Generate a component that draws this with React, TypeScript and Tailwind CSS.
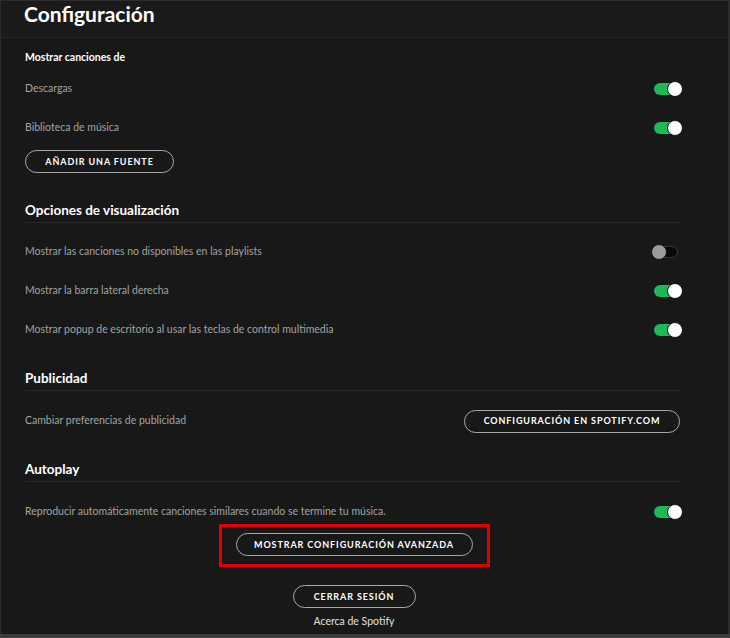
import React from "react";

const font = { fontFamily: "Lato, 'Open Sans', Roboto, sans-serif" };

function Toggle({ on }: { on: boolean }) {
  return (
    <div className={`relative h-[16px] w-[29px] shrink-0 ${on ? "" : "mr-[3px]"}`}>
      <div
        className={`absolute left-0 top-[2px] h-[12px] w-[27px] rounded-full ${
          on ? "bg-[#1db954]" : "border border-[#3a3a3a] bg-[#080808]"
        }`}
      />
      <div
        className={`absolute top-0 h-[16px] w-[16px] rounded-full border border-[#111] ${
          on ? "right-0 bg-white" : "left-0 bg-[#9b9b9b]"
        }`}
      />
    </div>
  );
}

function Pill({ children, className = "" }: { children: React.ReactNode; className?: string }) {
  return (
    <button
      className={`flex h-[23px] items-center justify-center rounded-full border border-[#a8a8a8] text-[9px] font-bold uppercase tracking-[0.9px] text-white ${className}`}
    >
      {children}
    </button>
  );
}

function Row({ label, on, className = "" }: { label: string; on: boolean; className?: string }) {
  return (
    <div className={`flex h-[22px] items-center justify-between ${className}`}>
      <span className="text-[10.5px] text-[#a3a3a3]">{label}</span>
      <Toggle on={on} />
    </div>
  );
}

function Heading({ title, className = "" }: { title: string; className?: string }) {
  return (
    <div className={`mr-[3px] flex h-[24px] items-center border-b border-[#282828] ${className}`}>
      <span className="text-[13.5px] font-bold text-white">{title}</span>
    </div>
  );
}

export default function App() {
  return (
    <div className="h-[638px] w-[730px] overflow-hidden bg-[#181818]" style={font}>
      <div className="h-[634px] border-l border-r-2 border-t border-[#2c2c2c]">
        <header className="flex h-[37px] items-start border-b border-[#262626] bg-[#1a1a1a] pl-[23px]">
          <h1 className="text-[21px] font-bold leading-[26px] text-white">Configuración</h1>
        </header>

        <main className="pl-[24px] pr-[45px]">
          <div className="flex h-[40px] items-center">
            <span className="text-[10.5px] font-bold text-white">Mostrar canciones de</span>
          </div>
          <Row label="Descargas" on />
          <Row label="Biblioteca de música" on className="mt-[17px]" />
          <Pill className="mt-[11px] w-[149px]">Añadir una fuente</Pill>

          <Heading title="Opciones de visualización" className="mt-[26px]" />
          <Row label="Mostrar las canciones no disponibles en las playlists" on={false} className="mt-[18px]" />
          <Row label="Mostrar la barra lateral derecha" on className="mt-[17px]" />
          <Row label="Mostrar popup de escritorio al usar las teclas de control multimedia" on className="mt-[17px]" />

          <Heading title="Publicidad" className="mt-[26px]" />
          <div className="mt-[18px] flex h-[24px] items-center justify-between pr-[3px]">
            <span className="text-[10.5px] text-[#a3a3a3]">Cambiar preferencias de publicidad</span>
            <Pill className="w-[216px]">Configuración en spotify.com</Pill>
          </div>

          <Heading title="Autoplay" className="mt-[25px]" />
          <Row
            label="Reproducir automáticamente canciones similares cuando se termine tu música."
            on
            className="mt-[19px]"
          />

          <div className="mt-[1px] flex flex-col items-center">
            <div className="flex h-[43px] w-[271px] items-start justify-center border-[3px] border-[#e00000] pt-[6px]">
              <Pill className="w-[237px]">Mostrar configuración avanzada</Pill>
            </div>
            <Pill className="mt-[18px] w-[123px]">Cerrar sesión</Pill>
            <span className="mt-[5px] text-[10.5px] leading-[16px] text-[#e0e0e0]">Acerca de Spotify</span>
          </div>
        </main>
      </div>
      <div className="h-[4px] bg-[#3c3c3c]" />
    </div>
  );
}
